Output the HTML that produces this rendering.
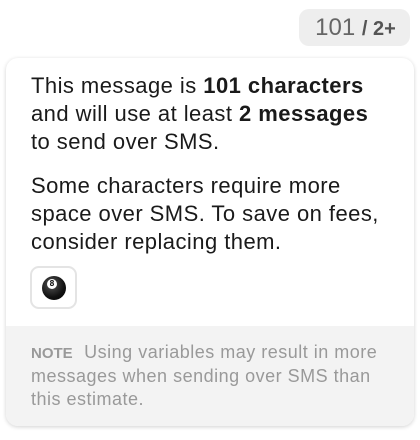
<!DOCTYPE html>
<html><head><style>
body{margin:0;width:420px;height:440px;background:#fff;font-family:"Liberation Sans",sans-serif;position:relative;overflow:hidden}
.badge{position:absolute;left:299px;top:9px;width:111px;height:37px;background:#eeeeee;border-radius:10px;color:#666;font-size:24px;line-height:37px;text-align:center;box-sizing:border-box;padding-left:2px}
.badge b{font-size:20px;color:#555}
.card{position:absolute;left:6px;top:58px;width:408px;height:368px;border-radius:12px;background:#fff;box-shadow:0 1px 4px rgba(0,0,0,.18);overflow:hidden}
.body{padding:14px 20px 0 25px;color:#1a1a1a;font-size:22px;letter-spacing:0.45px;line-height:28px}
.body p{margin:0 0 16px}
.emoji{position:absolute;left:24px;top:208px;width:47px;height:43px;border:2px solid #e4e4e4;border-radius:9px;box-sizing:border-box}
.ball{position:absolute;left:10px;top:8px;width:24px;height:24px;border-radius:50%;background:radial-gradient(circle at 40% 35%,#555 0,#111 60%,#000 100%)}
.ball span{position:absolute;left:5px;top:3px;width:10px;height:10px;border-radius:50%;background:#fff;font-size:8px;line-height:10px;text-align:center;color:#000;font-weight:bold}
.foot{position:absolute;left:0;top:268px;width:100%;height:100px;background:#f3f3f3;color:#999;font-size:18px;letter-spacing:0.5px;line-height:23px;padding:15px 16px 0 25px;box-sizing:border-box}
.foot b{font-size:15px;margin-right:6px;letter-spacing:0}
</style></head><body>
<div class="badge">101 <b>/ 2+</b></div>
<div class="card">
<div class="body">
<p>This message is <b>101 characters</b> and will use at least <b>2 messages</b> to send over SMS.</p>
<p>Some characters require more space over SMS. To save on fees, consider replacing them.</p>
</div>
<div class="emoji"><div class="ball"><span>8</span></div></div>
<div class="foot"><b>NOTE</b> Using variables may result in more messages when sending over SMS than this estimate.</div>
</div>
</body></html>
